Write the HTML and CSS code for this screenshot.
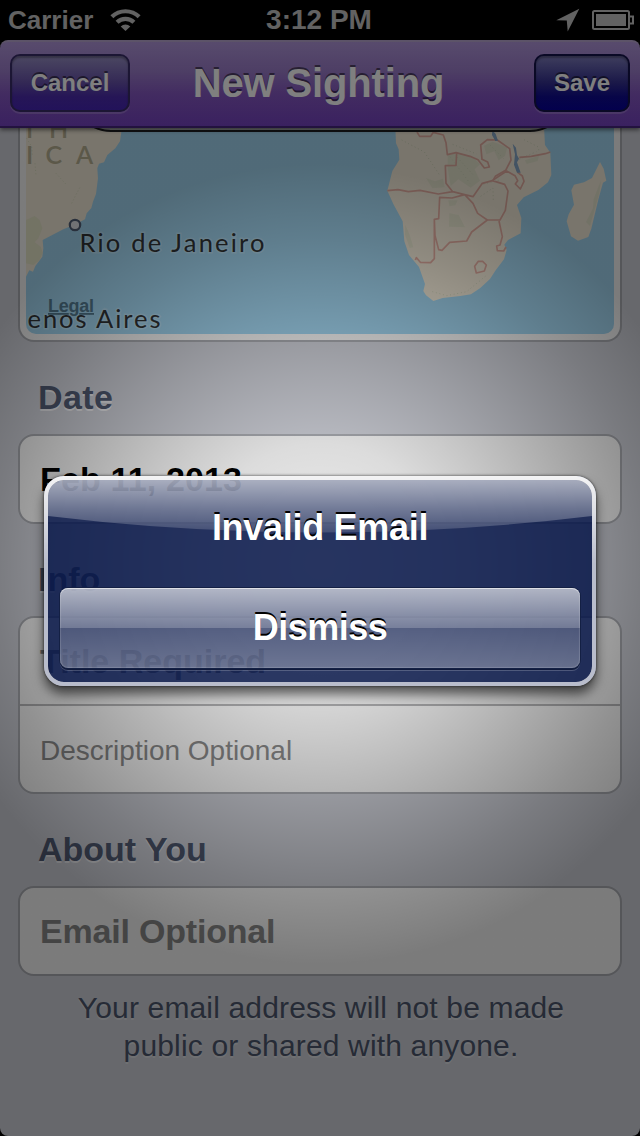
FILE: index.html
```
<!DOCTYPE html>
<html lang="en">
<head>
<meta charset="utf-8">
<title>New Sighting</title>
<link rel="stylesheet" href="styles.css">
</head>
<body>
<div class="phone">
  <header class="status">
    <div class="status-left">
      <span class="carrier">Carrier</span>
      <svg class="wifi" width="31" height="23" viewBox="0 0 32 24">
        <g fill="none" stroke="#c4c4c4" stroke-width="4.400">
          <path d="M1.800 9.200a20.300 20.300 0 0 1 28.400 0"/>
          <path d="M7.200 14.900a12.600 12.600 0 0 1 17.600 0"/>
        </g>
        <path fill="#c4c4c4" d="M11 19.200a7.300 7.300 0 0 1 10 0L16 24z"/>
      </svg>
    </div>
    <span class="clock">3:12 PM</span>
    <div class="status-right">
      <svg width="24" height="24" viewBox="0 0 24 24"><path fill="#c4c4c4" d="M23.300 .7 11.700 23.500 10.800 12.600 .3 12.200z"/></svg>
      <svg class="battery" width="43" height="20" viewBox="0 0 43 20">
        <rect x="1" y="1" width="36" height="18" rx="1.500" fill="none" stroke="#c4c4c4" stroke-width="2"/>
        <rect x="4" y="4" width="30" height="12" fill="#c4c4c4"/>
        <path d="M38 6.500h3v7h-3" fill="none" stroke="#c4c4c4" stroke-width="2"/>
      </svg>
    </div>
  </header>
  <nav class="navbar">
    <button class="nav-btn cancel"><span>Cancel</span></button>
    <h1><span>New Sighting</span></h1>
    <button class="nav-btn save"><span>Save</span></button>
  </nav>
  <main class="form">
    <section class="map-card">
      <svg class="map" width="588" height="206" viewBox="26 128 588 206">
        <rect x="26" y="128" width="588" height="206" fill="#a1d5f0"/>
        <g transform="translate(0 120) scale(.33333)">
          <path fill="#f2ead8" d="M70 20H364V36L360 64 346 85 322 105 312 127 297 131 292 145 294 175 288 222 279 245 274 264 260 280 255 298 224 314 190 328 128 360 130 385 127 410 106 438 99 455 88 451 78 470H60z"/>
          <path fill="#e2e4c4" opacity=".75" d="M78 300 104 288 119 300 127 325 115 355 104 367 122 380 128 398 119 420 100 435 78 430z"/>
          <path fill="none" stroke="#d8ddbd" stroke-width="3" stroke-dasharray="3 7" d="M80 55 95 80 97 105M215 250 230 220 241 200M105 130 108 166M168 160 200 195"/>
        </g>
        <g transform="translate(370 120) scale(.33333)" stroke-linejoin="round">
          <path fill="#f2ead8" d="M76 20H522L525 75 541 98 544 165 534 187 505 210 461 232 441 255 454 294 452 340 414 360 403 374 410 390 402 418 377 451 360 477 330 505 303 523 271 528 218 534 190 543 168 526 160 513 165 492 147 441 117 405 103 364 98 304 70 252 52 212 67 153 88 119 86 88 78 70z"/>
          <path fill="#f2ead8" d="M690 126 701 146 709 182 699 188 686 235 664 326 655 351 624 362 603 349 590 304 596 283 612 254 604 211 612 194 642 187 666 174z"/>
          <g fill="#e0e2c9" opacity=".7">
            <path d="M233 105 267 99 307 110 330 133 314 148 330 182 302 203 265 178 242 198 233 144z"/>
            <path d="M342 77 368 65 412 82 405 108 386 121 373 94 349 103zM168 174 195 184 219 176 224 202 187 205zM238 280 266 285 285 322 237 320zM235 241h28l-7 15-18 3zM465 121l42-14-4 16-33 9z"/>
            <path d="M693 181 688 220 660 318 648 306 669 265 671 237zM106 314 119 344 130 382 119 384 105 344z"/>
          </g>
          <path fill="none" stroke="#d2d8bd" stroke-width="3" stroke-dasharray="3 8" d="M95 60 163 96 210 167M240 110 270 150 300 190M262 112 310 165M248 73 320 102M360 75 400 115M462 59 505 81 507 95M187 515 230 527 290 515 352 464M332 229 369 204 370 244M386 181 334 194M448 118 499 95"/>
          <g fill="none" stroke="#e3aca0" stroke-width="5">
            <path d="M141 36 149 49H182L190 37 220 45 228 68 232 104 258 98 300 109 324 119 343 144 358 141 353 126 336 118 332 75 352 59 382 60 419 86 423 120 407 151 376 169 369 181"/>
            <path d="M52 212 84 209 115 215 150 211 205 222 248 215 228 190 226 137 258 136 260 98M248 215 284 224 309 230 337 190 367 182 404 193 414 213 406 271 390 300 352 300 323 280 309 250 284 224 246 234 209 232 206 296 193 298 195 346 206 389 216 391 239 367 290 363 305 336 352 300M193 298 193 416 182 428 151 427 139 413 136 420M387 303 397 350 390 375 380 378 382 392 401 393 408 381M368 181 410 153 435 167 443 182 436 192 451 207 462 184 457 168 444 158 441 146M448 112 484 109 526 101 541 96"/>
            <path d="M325 424 338 424 349 435 343 453 319 459 314 439z"/>
          </g>
          <path fill="#86a6c6" d="M367 31 377 42 384 62 376 63 366 45zM428 71 438 83 441 105 447 116 441 127 452 158 441 158 432 134 435 103z"/>
        </g>
        <path fill="#c9ccd0" d="M88 120V127Q99 131 111 131H530Q543 130 549 127V120z"/>
        <path fill="none" stroke="#202125" stroke-width="2" d="M92 126Q101 131 111 131H530Q539 131 547 127"/>
        <g class="region"><text x="26" y="138">I</text><text x="49" y="138">H</text><text x="26" y="164">I</text><text x="45.500" y="164">C</text><text x="76" y="164">A</text></g>
        <circle cx="75" cy="225" r="5.200" fill="#e3e5ea" stroke="#526078" stroke-width="2.200"/>
        <text class="city" x="79.500" y="251.500" textLength="185">Rio de Janeiro</text>
        <text class="city" x="27.500" y="327.500" textLength="133">enos Aires</text>
        <text class="legal" x="48" y="312" textLength="46">Legal</text>
      </svg>
    </section>
    <h2 class="date"><span>Date</span></h2>
    <section class="card"><div class="row value"><span>Feb 11, 2013</span></div></section>
    <h2><span>Info</span></h2>
    <section class="card">
      <div class="row hint"><span>Title Required</span></div>
      <div class="row hint light"><span>Description Optional</span></div>
    </section>
    <h2 class="about"><span>About You</span></h2>
    <section class="card"><div class="row hint email"><span>Email Optional</span></div></section>
    <p class="note"><span>Your email address will not be made</span><br><span>public or shared with anyone.</span></p>
  </main>
  <div class="dim"></div>
  <div class="alert" role="alertdialog">
    <svg class="gloss" width="544" height="54" viewBox="0 0 544 54">
      <defs><linearGradient id="shine" x2="0" y2="1"><stop stop-color="#fff" stop-opacity=".6"/><stop offset=".55" stop-color="#fff" stop-opacity=".33"/><stop offset="1" stop-color="#fff" stop-opacity=".14"/></linearGradient></defs>
      <path fill="url(#shine)" d="M0 0H544V36Q272 69 0 36z"/>
    </svg>
    <div class="alert-title"><span>Invalid Email</span></div>
    <button class="dismiss"><span>Dismiss</span></button>
  </div>
</div>
</body>
</html>
```
FILE: styles.css
```
* { box-sizing: border-box; }
body { margin: 0; background: #000; }
button { padding: 0; border: 0; font: inherit; color: inherit; }
span { display: inline-block; white-space: nowrap; }

.phone {
  position: relative;
  display: flex;
  flex-direction: column;
  width: 640px;
  height: 1136px;
  overflow: hidden;
  background: #000;
  font-family: "Liberation Sans", Arial, sans-serif;
}

.status {
  display: grid;
  grid-template-columns: 1fr auto 1fr;
  align-items: center;
  height: 40px;
  flex: none;
  padding: 0 5px 0 8px;
  color: #c4c4c4;
  font-size: 26px;
  font-weight: bold;
  line-height: 40px;
}
.status-left { display: flex; align-items: center; gap: 17px; }
.status-right { display: flex; align-items: center; justify-content: flex-end; gap: 12px; }
.wifi { margin-top: -2px; }
.clock { font-size: 28px; margin-right: 5px; }

.navbar {
  display: flex;
  align-items: center;
  justify-content: space-between;
  flex: none;
  z-index: 1;
  height: 88px;
  padding: 0 10px 2px;
  border-top: 2px solid #b8a6d0;
  border-bottom: 2px solid #46247f;
  border-radius: 8px 8px 0 0;
  background: linear-gradient(#b096da 0%, #9b7cca 35%, #8557c2 62%, #7542c0 100%);
  box-shadow: 0 2px 4px rgba(0, 0, 0, .5);
  color: #fff;
}
.navbar h1 {
  margin: 0 27px 0 0;
  font-size: 40px;
  line-height: 84px;
  letter-spacing: -.15px;
  text-shadow: 0 -2px 0 rgba(0, 0, 0, .5);
}
.nav-btn {
  height: 58px;
  border: 2px solid #382c68;
  border-radius: 10px;
  font-size: 24px;
  font-weight: bold;
  text-shadow: 0 -2px 0 rgba(0, 0, 0, .5);
  box-shadow: 0 2px 0 rgba(255, 255, 255, .2), inset 0 2px 2px rgba(0, 0, 0, .3);
}
.cancel { width: 120px; background: linear-gradient(#978fc4, #6650aa 50%, #4c2cad 75%, #4524b4); }
.save { width: 96px; border-color: #14134b; background: linear-gradient(#7d7cbb, #332f90 50%, #0f0b90 75%, #06009a); }

.form {
  display: flex;
  flex-direction: column;
  flex: 1;
  padding: 0 18px;
  border-radius: 0 0 8px 8px;
  background: #ced0d8;
}
.map-card {
  height: 214px;
  flex: none;
  padding: 0 6px 6px;
  border: solid #aaacb2;
  border-width: 0 2px 2px;
  border-radius: 0 0 16px 16px;
  background: #f7f7f7;
}
.map { display: block; border-radius: 0 0 10px 10px; }
.map text { font-family: Lato, sans-serif; }
.map .region text { fill: #b7b092; font-size: 25px; font-weight: 600; }
.map .city { fill: #303335; font-size: 25.5px; font-weight: 400; paint-order: stroke; stroke: rgba(255, 255, 255, .22); stroke-width: 3px; }
.map .legal { fill: #52798f; font: bold 18px "Liberation Sans", Arial, sans-serif; text-decoration: underline; }

h2 {
  height: 92px;
  flex: none;
  margin: 0;
  padding: 36px 20px 0;
  color: #505a72;
  font-size: 34px;
  line-height: 38px;
  text-shadow: 0 2px 0 rgba(255, 255, 255, .6);
}
.date { letter-spacing: .4px; }
.card {
  flex: none;
  border: 2px solid #aaacb2;
  border-radius: 16px;
  background: #f7f7f7;
  font-size: 34px;
  font-weight: bold;
}
.row { height: 86px; padding: 0 20px; line-height: 86px; }
.value { color: #000; letter-spacing: .15px; }
.hint { color: #888; }
.email { letter-spacing: -.2px; }
.row + .row { height: 88px; border-top: 2px solid #b4b4b6; }
.light { font-size: 28px; font-weight: normal; line-height: 89px; }
.note {
  margin: 13px 0 0;
  padding-left: 2px;
  color: #4c566c;
  font-size: 30px;
  line-height: 38px;
  letter-spacing: .16px;
  text-align: center;
  text-shadow: 0 2px 0 rgba(255, 255, 255, .35);
}

.dim {
  position: absolute;
  inset: 0;
  z-index: 2;
  background: radial-gradient(circle 400px at 320px 564px, rgba(0, 0, 0, .03) 0, rgba(0, 0, 0, .11) 120px, rgba(0, 0, 0, .18) 170px, rgba(0, 0, 0, .24) 210px, rgba(0, 0, 0, .33) 270px, rgba(0, 0, 0, .41) 326px, rgba(0, 0, 0, .5) 400px);
}

.alert {
  position: absolute;
  z-index: 3;
  left: 44px;
  top: 476px;
  width: 552px;
  height: 210px;
  padding: 0 12px;
  border: 4px solid #b9bdcc;
  border-radius: 20px;
  background: rgba(6, 22, 73, .83);
  background-clip: padding-box;
  box-shadow: 0 8px 12px rgba(0, 0, 0, .6), 0 0 3px rgba(0, 0, 0, .7);
  color: #fff;
  font-size: 36px;
  font-weight: bold;
  text-align: center;
  text-shadow: 0 -2px 0 #000;
}
/* White highlight that fades down the upper part of the frame */
.alert::after {
  content: "";
  position: absolute;
  inset: -4px;
  border: 4px solid #f3f3f4;
  border-radius: 20px;
  mask-image: linear-gradient(#000, rgba(0, 0, 0, .6) 18%, transparent 42%);
}
.gloss { position: absolute; left: 0; top: 0; border-radius: 16px 16px 0 0; }
.alert-title { position: relative; height: 108px; line-height: 95px; letter-spacing: -.3px; }
.dismiss {
  position: relative;
  display: block;
  width: 520px;
  height: 80px;
  border-radius: 8px;
  letter-spacing: -.5px;
  background: linear-gradient(rgba(255, 255, 255, .65), rgba(255, 255, 255, .36) 50%, rgba(255, 255, 255, .2) 50%, rgba(255, 255, 255, .31));
  box-shadow: 0 0 0 1px #142044, 0 2px 0 #101a3b, 0 3px 0 rgba(255, 255, 255, .2), inset 0 1px 0 rgba(255, 255, 255, .5), inset 0 0 1px 1px rgba(255, 255, 255, .15);
  text-shadow: 0 -2px 0 #000;
}
```
